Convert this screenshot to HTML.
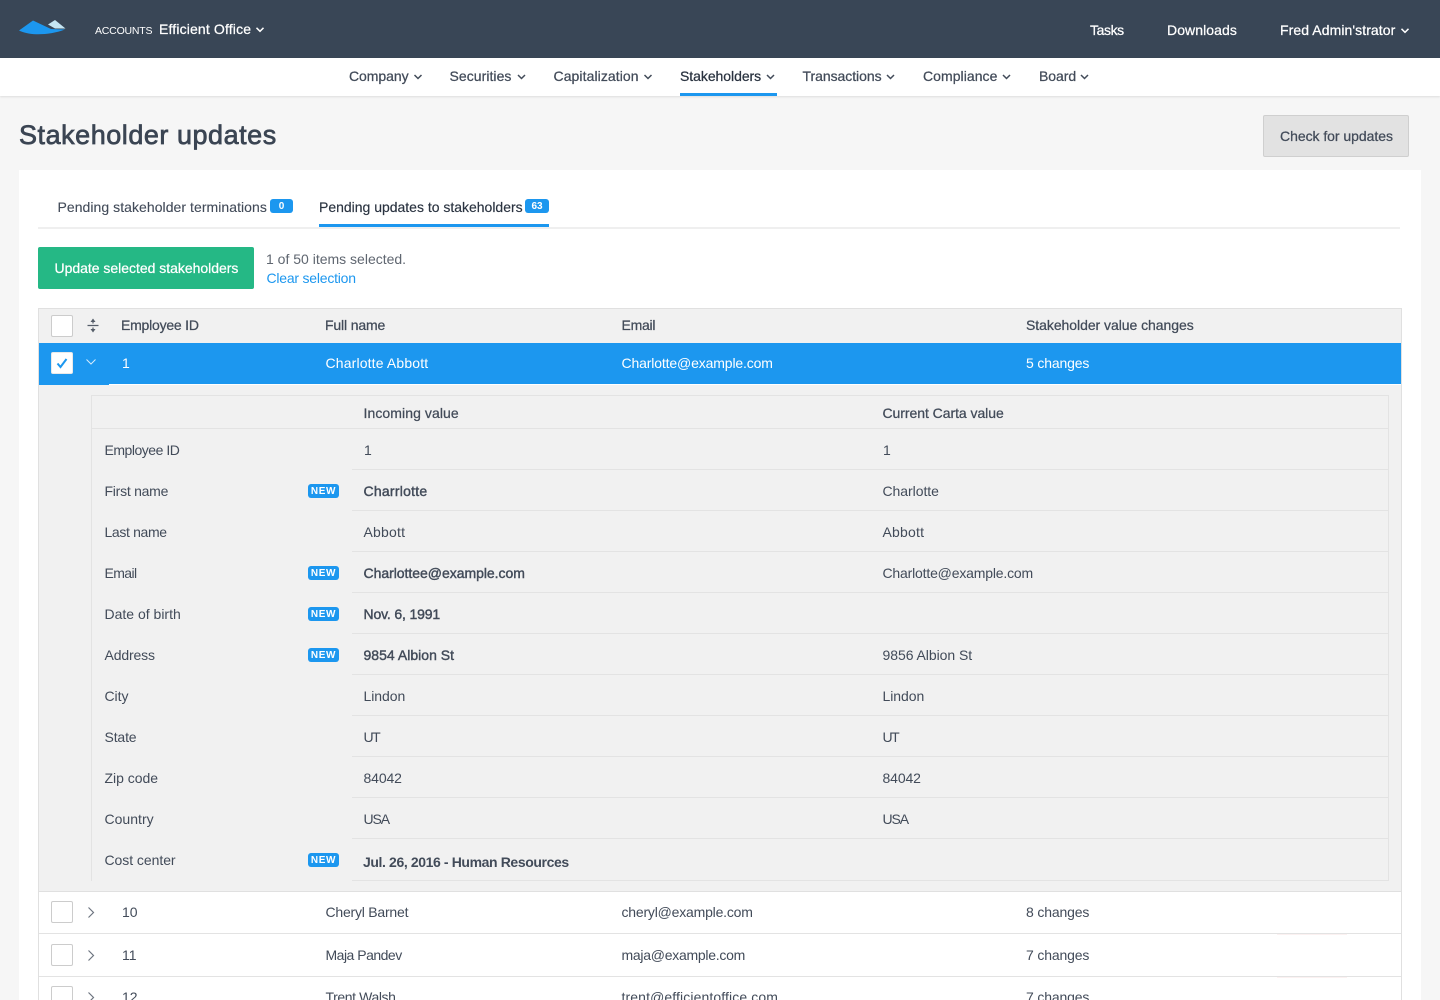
<!DOCTYPE html>
<html lang="en"><head><meta charset="utf-8"><title>Stakeholder updates</title>
<style>
html,body{margin:0;padding:0;width:1440px;height:1000px;overflow:hidden;background:#f6f6f6}
body{position:relative;font:14px/20px "Liberation Sans",Arial,sans-serif;color:#424b59}
div,span.t,a,svg.a{position:absolute}
.t{white-space:nowrap;letter-spacing:-.05px}
.m{-webkit-text-stroke:.25px currentColor}
.v{-webkit-text-stroke:.42px currentColor}
.w{color:#fff}
.box{width:20px;height:20px;border:1px solid #ccc;border-radius:2px;background:#fff}
.nw{left:308px;width:31px;height:14px;background:#1c97ef;border-radius:3px;color:#fff;font:bold 10px/15px "Liberation Sans",sans-serif;letter-spacing:.6px;text-align:center}
.ln{background:#e3e3e3;height:1px}
</style></head><body>

<div style="left:0;top:0;width:1440px;height:58px;background:#394656"></div>
<svg class="a" style="left:18px;top:19px" width="50" height="17" viewBox="0 0 50 17"><path d="M30 5.500L37 1L47.500 9.500L37 9.500Z" fill="#c5e6f3"/><path d="M1 11.500L15 1.500L33 10L47 10.500C38 14 27 15.500 18 15.200C11 15 5 13.500 1 11.500Z" fill="#1c97ef"/></svg>
<span class="t w" style="left:95px;top:21px;font-size:10.500px;letter-spacing:-.2px">ACCOUNTS</span>
<span class="t w m" style="left:159px;top:19px;font-size:14px;letter-spacing:.15px">Efficient Office</span>
<svg class="a" style="left:255px;top:26px" width="10" height="8" viewBox="0 0 10 8"><path d="M1.500 1.800L5 5.300L8.500 1.800" fill="none" stroke="#fff" stroke-width="1.500"/></svg>
<span class="t w m" style="left:1090px;top:20px;letter-spacing:-.4px">Tasks</span>
<span class="t w m" style="left:1167px;top:20px;letter-spacing:.08px">Downloads</span>
<span class="t w m" style="left:1280px;top:20px;letter-spacing:.08px">Fred Admin'strator</span>
<svg class="a" style="left:1400px;top:27px" width="10" height="8" viewBox="0 0 10 8"><path d="M1.500 1.800L5 5.300L8.500 1.800" fill="none" stroke="#fff" stroke-width="1.500"/></svg>

<div style="left:0;top:58px;width:1440px;height:38px;background:#fff;box-shadow:0 1px 2px rgba(0,0,0,.1)"></div>
<span class="t m" style="left:349px;top:66px">Company</span>
<span class="t m" style="left:449.500px;top:66px;letter-spacing:.05px">Securities</span>
<span class="t m" style="left:553.500px;top:66px;letter-spacing:.08px">Capitalization</span>
<span class="t m" style="left:680px;top:66px;color:#2a3340">Stakeholders</span>
<span class="t m" style="left:802.500px;top:66px">Transactions</span>
<span class="t m" style="left:923px;top:66px;letter-spacing:.05px">Compliance</span>
<span class="t m" style="left:1039px;top:66px">Board</span>
<svg class="a" style="left:0;top:0" width="1440" height="96" fill="none" stroke="#424b59" stroke-width="1.500">
<path d="M414.500 75l3.500 3.500l3.500-3.500M518 75l3.500 3.500l3.500-3.500M644.500 75l3.500 3.500l3.500-3.500M767 75l3.500 3.500l3.500-3.500M887 75l3.500 3.500l3.500-3.500M1003 75l3.500 3.500l3.500-3.500M1081 75l3.500 3.500l3.500-3.500"/></svg>
<div style="left:680px;top:93px;width:97px;height:3px;background:#1c97ef"></div>

<span class="t" style="left:19px;top:119px;font-size:27px;line-height:32px;letter-spacing:.53px;-webkit-text-stroke:.7px #3b4553;color:#3b4553">Stakeholder updates</span>
<div style="left:1263px;top:115px;width:144px;height:40px;background:#e2e2e2;border:1px solid #cfcfcf;border-radius:2px"></div>
<span class="t m" style="left:1280px;top:126px;letter-spacing:-.04px">Check for updates</span>

<div style="left:19px;top:170px;width:1402px;height:830px;background:#fff"></div>
<span class="t m" style="left:57.500px;top:197px;letter-spacing:.05px;-webkit-text-stroke:.1px">Pending stakeholder terminations</span>
<div style="left:270px;top:199px;width:23px;height:14px;background:#1c97ef;border-radius:3px;color:#fff;font:bold 10px/15px 'Liberation Sans',sans-serif;text-align:center">0</div>
<span class="t m" style="left:319px;top:197px;color:#2a3340;letter-spacing:-.01px;-webkit-text-stroke:.15px">Pending updates to stakeholders</span>
<div style="left:525px;top:199px;width:24px;height:14px;background:#1c97ef;border-radius:3px;color:#fff;font:bold 10px/15px 'Liberation Sans',sans-serif;text-align:center">63</div>
<div class="ln" style="left:38px;top:227px;width:1362px;height:2px;background:#efefef"></div>
<div style="left:319px;top:224px;width:230px;height:3px;background:#1c97ef"></div>

<div style="left:38px;top:247px;width:216px;height:42px;background:#25b885;border-radius:2px"></div>
<span class="t w m" style="left:54.500px;top:258px;letter-spacing:-.02px">Update selected stakeholders</span>
<span class="t" style="left:266px;top:249px;color:#5f6670;letter-spacing:0">1 of 50 items selected.</span>
<a class="t" style="left:266.500px;top:268px;color:#1c97ef;letter-spacing:-.22px">Clear selection</a>

<div style="left:38px;top:308px;width:1362px;height:692px;border-left:1px solid #e0e0e0;border-right:1px solid #e0e0e0;border-top:1px solid #e0e0e0"></div>
<div style="left:39px;top:309px;width:1362px;height:34px;background:#f1f1f1"></div>
<div class="box" style="left:51px;top:315px"></div>
<svg class="a" style="left:86px;top:317px" width="14" height="17" viewBox="0 0 14 17"><path d="M1.500 8.500H12.500M7 3V6.500M7 10.500V14" stroke="#555d69" stroke-width="1.200"/><path d="M7 1.500L9.500 5H4.500ZM7 15.500L4.500 12H9.500Z" fill="#555d69"/></svg>
<span class="t m" style="left:121px;top:315px;letter-spacing:-.22px">Employee ID</span>
<span class="t m" style="left:325px;top:315px;letter-spacing:-.15px">Full name</span>
<span class="t m" style="left:621.500px;top:315px;letter-spacing:-.25px">Email</span>
<span class="t m" style="left:1026px;top:315px">Stakeholder value changes</span>

<div style="left:39px;top:343px;width:1362px;height:41px;background:#1c97ef"></div>
<div style="left:39px;top:384px;width:70px;height:1px;background:#1c97ef"></div>
<div class="box" style="left:51px;top:352px;border-color:#e9e9e9"></div>
<svg class="a" style="left:51px;top:352px" width="22" height="22"><path d="M6.500 11.500L9.500 15L15.500 7" fill="none" stroke="#1c97ef" stroke-width="2"/></svg>
<svg class="a" style="left:85px;top:358px" width="12" height="9"><path d="M1.500 1.500L6 6L10.500 1.500" fill="none" stroke="#d6ecfc" stroke-width="1"/></svg>
<span class="t w" style="left:122px;top:353px">1</span>
<span class="t w" style="left:325.500px;top:353px;letter-spacing:.15px">Charlotte Abbott</span>
<span class="t w" style="left:621.500px;top:353px;letter-spacing:-.14px">Charlotte@example.com</span>
<span class="t w" style="left:1026px;top:353px;letter-spacing:-.15px">5 changes</span>

<div style="left:39px;top:385px;width:1362px;height:506px;background:#f1f1f1;border-bottom:1px solid #e0e0e0"></div>
<div style="left:91px;top:395px;width:1297px;height:485px;border:1px solid #e3e3e3;border-bottom:0;border-left:0"></div>
<div style="left:91px;top:395px;width:1px;height:486px;background:#e3e3e3"></div>
<div class="ln" style="left:91px;top:395px;width:1298px"></div>
<div class="ln" style="left:91px;top:428px;width:1298px"></div>
<div class="ln" style="left:352px;top:469px;width:1037px"></div>
<div class="ln" style="left:352px;top:510px;width:1037px"></div>
<div class="ln" style="left:352px;top:551px;width:1037px"></div>
<div class="ln" style="left:352px;top:592px;width:1037px"></div>
<div class="ln" style="left:352px;top:633px;width:1037px"></div>
<div class="ln" style="left:352px;top:674px;width:1037px"></div>
<div class="ln" style="left:352px;top:715px;width:1037px"></div>
<div class="ln" style="left:352px;top:756px;width:1037px"></div>
<div class="ln" style="left:352px;top:797px;width:1037px"></div>
<div class="ln" style="left:352px;top:838px;width:1037px"></div>
<div class="ln" style="left:352px;top:880px;width:1037px"></div>

<span class="t m" style="left:363.500px;top:403px;letter-spacing:.08px">Incoming value</span>
<span class="t m" style="left:882.500px;top:403px">Current Carta value</span>

<span class="t" style="left:104.500px;top:440px;letter-spacing:-.48px">Employee ID</span><span class="t" style="left:364px;top:440px">1</span><span class="t" style="left:883px;top:440px">1</span>
<span class="t" style="left:104.500px;top:481px;letter-spacing:-.25px">First name</span><div class="nw" style="top:484px">NEW</div><span class="t v" style="left:363.500px;top:481px;letter-spacing:.25px">Charrlotte</span><span class="t" style="left:882.500px;top:481px">Charlotte</span>
<span class="t" style="left:104.500px;top:522px;letter-spacing:-.35px">Last name</span><span class="t" style="left:363.500px;top:522px;letter-spacing:.2px">Abbott</span><span class="t" style="left:882.500px;top:522px;letter-spacing:.2px">Abbott</span>
<span class="t" style="left:104.500px;top:563px;letter-spacing:-.6px">Email</span><div class="nw" style="top:566px">NEW</div><span class="t v" style="left:363.500px;top:563px;letter-spacing:-.03px">Charlottee@example.com</span><span class="t" style="left:882.500px;top:563px;letter-spacing:-.18px">Charlotte@example.com</span>
<span class="t" style="left:104.500px;top:604px;letter-spacing:0">Date of birth</span><div class="nw" style="top:607px">NEW</div><span class="t v" style="left:363.500px;top:604px;letter-spacing:-.15px">Nov. 6, 1991</span>
<span class="t" style="left:104.500px;top:645px;letter-spacing:-.15px">Address</span><div class="nw" style="top:648px">NEW</div><span class="t v" style="left:363.500px;top:645px;letter-spacing:.02px">9854 Albion St</span><span class="t" style="left:882.500px;top:645px">9856 Albion St</span>
<span class="t" style="left:104.500px;top:686px">City</span><span class="t" style="left:363.500px;top:686px">Lindon</span><span class="t" style="left:882.500px;top:686px">Lindon</span>
<span class="t" style="left:104.500px;top:727px;letter-spacing:-.15px">State</span><span class="t" style="left:363.500px;top:727px;letter-spacing:-1.500px">UT</span><span class="t" style="left:882.500px;top:727px;letter-spacing:-1.500px">UT</span>
<span class="t" style="left:104.500px;top:768px;letter-spacing:-.02px">Zip code</span><span class="t" style="left:363.500px;top:768px;letter-spacing:-.12px">84042</span><span class="t" style="left:882.500px;top:768px;letter-spacing:-.12px">84042</span>
<span class="t" style="left:104.500px;top:809px;letter-spacing:.02px">Country</span><span class="t" style="left:363.500px;top:809px;letter-spacing:-1.100px">USA</span><span class="t" style="left:882.500px;top:809px;letter-spacing:-1.100px">USA</span>
<span class="t" style="left:104.500px;top:850px">Cost center</span><div class="nw" style="top:853px">NEW</div><span class="t" style="left:363px;top:852px;font-weight:bold;letter-spacing:-.39px">Jul. 26, 2016 - Human Resources</span>

<div class="box" style="left:51px;top:901px"></div>
<svg class="a" style="left:87px;top:906px" width="9" height="13"><path d="M1.500 1.500L6.500 6.500L1.500 11.500" fill="none" stroke="#6e7580" stroke-width="1.200"/></svg>
<span class="t" style="left:122px;top:902px">10</span><span class="t" style="left:325.500px;top:902px;letter-spacing:-.22px">Cheryl Barnet</span><span class="t" style="left:621.500px;top:902px;letter-spacing:-.2px">cheryl@example.com</span><span class="t" style="left:1026px;top:902px;letter-spacing:-.15px">8 changes</span>
<div class="ln" style="left:39px;top:933px;width:1362px"></div>
<div style="left:1277px;top:934px;width:70px;height:1px;background:#fbf1f1"></div>
<div class="box" style="left:51px;top:944px"></div>
<svg class="a" style="left:87px;top:949px" width="9" height="13"><path d="M1.500 1.500L6.500 6.500L1.500 11.500" fill="none" stroke="#6e7580" stroke-width="1.200"/></svg>
<span class="t" style="left:122px;top:945px">11</span><span class="t" style="left:325.500px;top:945px;letter-spacing:-.5px">Maja Pandev</span><span class="t" style="left:621.500px;top:945px;letter-spacing:-.27px">maja@example.com</span><span class="t" style="left:1026px;top:945px;letter-spacing:-.15px">7 changes</span>
<div class="ln" style="left:39px;top:976px;width:1362px"></div>
<div style="left:1277px;top:977px;width:70px;height:1px;background:#fbf1f1"></div>
<div class="box" style="left:51px;top:986px"></div>
<svg class="a" style="left:87px;top:991px" width="9" height="13"><path d="M1.500 1.500L6.500 6.500L1.500 11.500" fill="none" stroke="#6e7580" stroke-width="1.200"/></svg>
<span class="t" style="left:122px;top:987px">12</span><span class="t" style="left:325.500px;top:987px;letter-spacing:-.4px">Trent Walsh</span><span class="t" style="left:621.500px;top:987px;letter-spacing:.11px">trent@efficientoffice.com</span><span class="t" style="left:1026px;top:987px;letter-spacing:-.15px">7 changes</span>
</body></html>
